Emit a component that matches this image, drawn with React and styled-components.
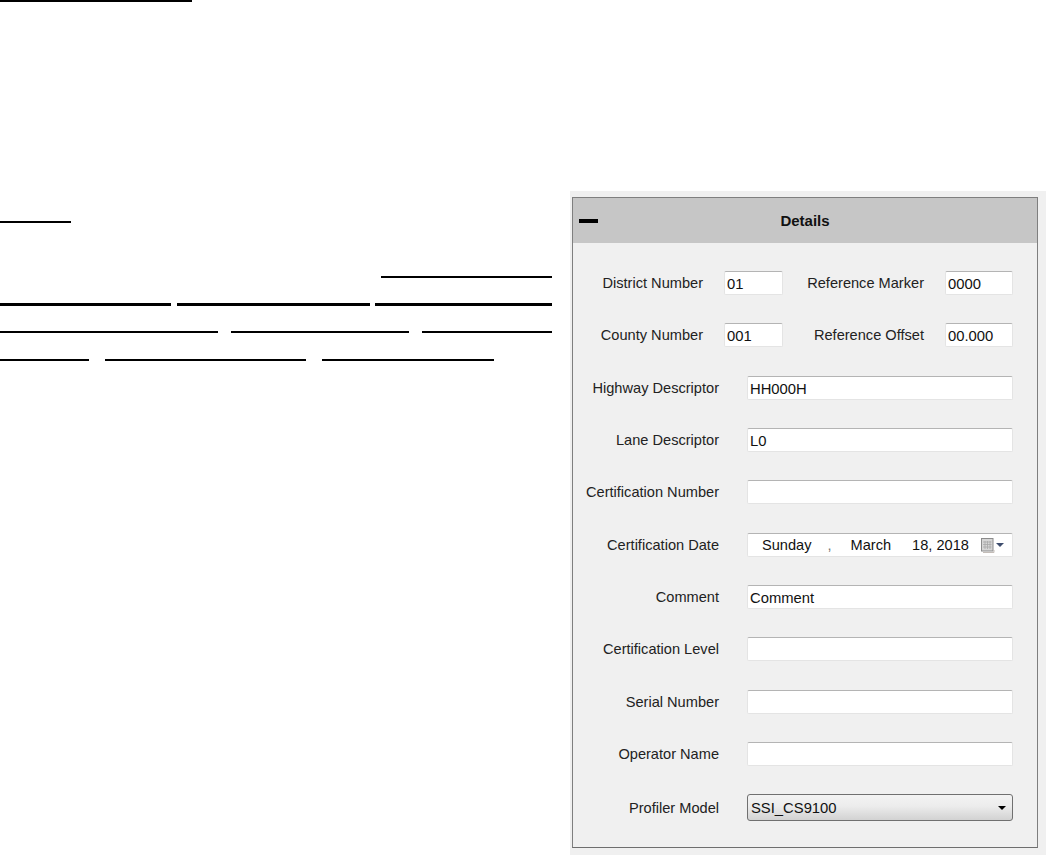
import React from 'react';
import styled, { createGlobalStyle } from 'styled-components';

const GlobalStyle = createGlobalStyle`
  html, body {
    margin: 0;
    padding: 0;
    background: #fff;
  }
`;

const Page = styled.div`
  display: flex;
  width: 1046px;
  height: 855px;
  overflow: hidden;
  font-family: "Liberation Sans", Arial, sans-serif;
  font-size: 14.6px;
  color: #222;
`;

const TextColumn = styled.div`
  width: 552px;
  margin-right: 18px;
  flex: none;
`;

const RuleRow = styled.div`
  display: flex;
  margin-top: ${p => p.$top}px;
  padding-left: ${p => p.$indent || 0}px;
`;

const Rule = styled.span`
  display: block;
  width: ${p => p.$width}px;
  height: ${p => p.$thick ? 3 : 2}px;
  margin-left: ${p => p.$gap || 0}px;
  background: #000;
`;

const Backdrop = styled.div`
  width: 476px;
  height: 664px;
  margin-top: 191px;
  padding: 6px 8px 7px 2px;
  box-sizing: border-box;
  background: #f0f0f0;
  flex: none;
`;

const Panel = styled.section`
  height: 100%;
  box-sizing: border-box;
  border: 1px solid #7f7f7f;
  border-bottom-color: #6e6e6e;
`;

const Header = styled.header`
  position: relative;
  display: flex;
  align-items: center;
  justify-content: center;
  height: 45px;
  background: #c6c6c6;
  font-size: 15px;
  font-weight: bold;
  color: #111;
`;

const Collapse = styled.span`
  position: absolute;
  left: 6px;
  top: 21px;
  width: 19px;
  height: 4px;
  background: #000;
`;

const Body = styled.div`
  display: grid;
  grid-auto-rows: 24px;
  row-gap: 28.33px;
  padding-top: 28px;
`;

const Row = styled.div`
  display: flex;
  align-items: center;
  height: ${p => p.$tall ? 27 : 24}px;
`;

const Label = styled.label`
  width: ${p => p.$width}px;
  margin-right: ${p => p.$gap}px;
  flex: none;
  text-align: right;
  white-space: nowrap;
`;

const Field = styled.input`
  width: ${p => p.$width}px;
  height: 24px;
  box-sizing: border-box;
  flex: none;
  padding: 2px 2px 0;
  border: 1px solid #e4e4e4;
  border-top-color: #b4b4b4;
  border-radius: 2px;
  background: #fff;
  outline: none;
  font: inherit;
  font-size: 14.8px;
  color: #111;
`;

const DateField = styled.div`
  display: flex;
  align-items: center;
  width: 266px;
  height: 24px;
  box-sizing: border-box;
  flex: none;
  border: 1px solid #e4e4e4;
  border-top-color: #b4b4b4;
  border-radius: 2px;
  background: #fff;
  color: #111;
`;

const DatePart = styled.span`
  margin-left: ${p => p.$left}px;
  color: ${p => p.$faint ? '#777' : 'inherit'};
  white-space: nowrap;
`;

const CalendarIcon = styled.svg`
  margin: 1px 0 0 12px;
  flex: none;
`;

const Select = styled.div`
  display: flex;
  align-items: center;
  justify-content: space-between;
  width: 266px;
  height: 27px;
  padding: 0 6px 0 3px;
  box-sizing: border-box;
  flex: none;
  border: 1px solid #707070;
  border-radius: 3px;
  background: linear-gradient(#f3f3f3, #ececec 45%, #d2d2d2);
  font-size: 14.8px;
  color: #111;
`;

const Caret = styled.span`
  width: 0;
  height: 0;
  border-left: 4px solid transparent;
  border-right: 4px solid transparent;
  border-top: 4px solid #000;
`;

const textLines = [
  { top: 0, rules: [{ width: 192 }] },
  { top: 219, rules: [{ width: 71 }] },
  { top: 53, indent: 381, rules: [{ width: 171 }] },
  { top: 25, thick: true, rules: [{ width: 171 }, { width: 193, gap: 6 }, { width: 177, gap: 5 }] },
  { top: 25, rules: [{ width: 218 }, { width: 178, gap: 13 }, { width: 130, gap: 13 }] },
  { top: 26, rules: [{ width: 89 }, { width: 201, gap: 16 }, { width: 172, gap: 16 }] },
];

const plainRows = [
  ['Highway Descriptor', 'HH000H'],
  ['Lane Descriptor', 'L0'],
  ['Certification Number', ''],
];

const lowerRows = [
  ['Comment', 'Comment'],
  ['Certification Level', ''],
  ['Serial Number', ''],
  ['Operator Name', ''],
];

function Calendar() {
  return (
    <CalendarIcon width="24" height="15" viewBox="0 0 24 15">
      <rect x="0.5" y="0.5" width="11.5" height="12.5" fill="#d6d6d6" stroke="#8c8c8c" />
      <path d="M2 4h8.5M2 6.5h8.5M2 9h8.5M4 3v8M6.5 3v8M9 3v8" stroke="#a8a8a8" strokeWidth="0.8" />
      <path d="M13 12v2.5H2" stroke="#c4bdb8" fill="none" />
      <path d="M15 5h8l-4 4z" fill="#3d4c6d" />
    </CalendarIcon>
  );
}

export default function App() {
  return (
    <Page>
      <GlobalStyle />
      <TextColumn>
        {textLines.map((line, i) => (
          <RuleRow key={i} $top={line.top} $indent={line.indent}>
            {line.rules.map((rule, j) => (
              <Rule key={j} $width={rule.width} $gap={rule.gap} $thick={line.thick} />
            ))}
          </RuleRow>
        ))}
      </TextColumn>
      <Backdrop>
        <Panel>
          <Header>
            <Collapse />
            Details
          </Header>
          <Body>
            <Row>
              <Label $width={130} $gap={21}>District Number</Label>
              <Field $width={59} defaultValue="01" readOnly />
              <Label $width={141} $gap={21}>Reference Marker</Label>
              <Field $width={68} defaultValue="0000" readOnly />
            </Row>
            <Row>
              <Label $width={130} $gap={21}>County Number</Label>
              <Field $width={59} defaultValue="001" readOnly />
              <Label $width={141} $gap={21}>Reference Offset</Label>
              <Field $width={68} defaultValue="00.000" readOnly />
            </Row>
            {plainRows.map(([label, value]) => (
              <Row key={label}>
                <Label $width={146} $gap={28}>{label}</Label>
                <Field $width={266} defaultValue={value} readOnly />
              </Row>
            ))}
            <Row>
              <Label $width={146} $gap={28}>Certification Date</Label>
              <DateField>
                <DatePart $left={14}>Sunday</DatePart>
                <DatePart $left={16} $faint>,</DatePart>
                <DatePart $left={19}>March</DatePart>
                <DatePart $left={21}>18, 2018</DatePart>
                <Calendar />
              </DateField>
            </Row>
            {lowerRows.map(([label, value]) => (
              <Row key={label}>
                <Label $width={146} $gap={28}>{label}</Label>
                <Field $width={266} defaultValue={value} readOnly />
              </Row>
            ))}
            <Row $tall>
              <Label $width={146} $gap={28}>Profiler Model</Label>
              <Select>
                SSI_CS9100
                <Caret />
              </Select>
            </Row>
          </Body>
        </Panel>
      </Backdrop>
    </Page>
  );
}
